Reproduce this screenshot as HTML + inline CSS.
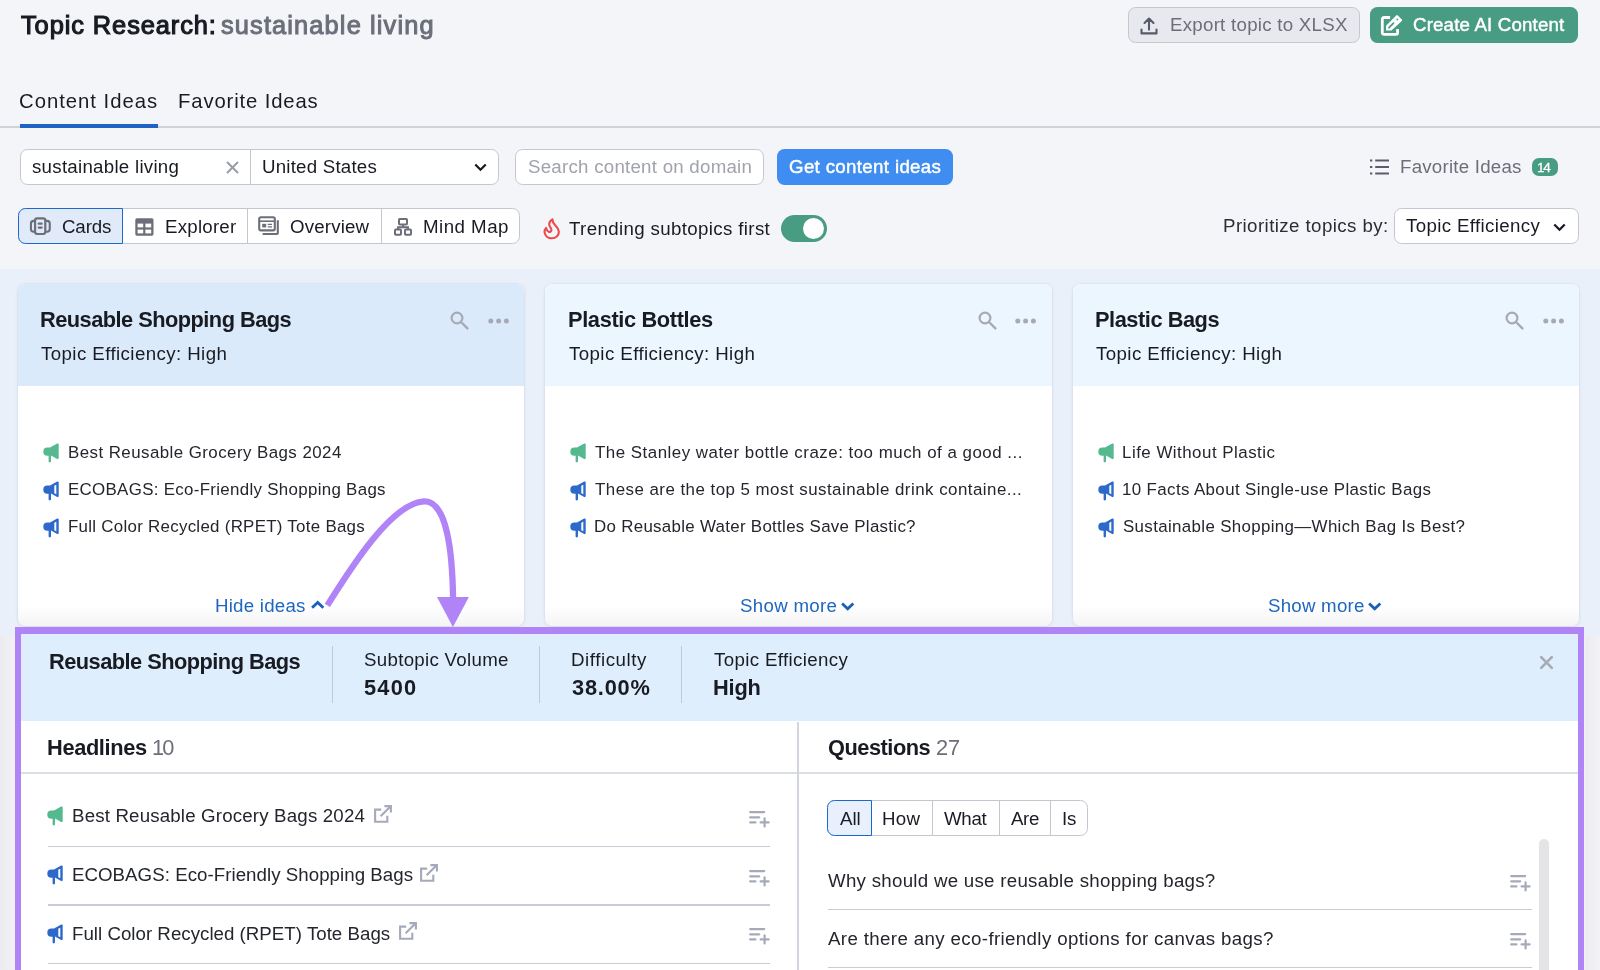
<!DOCTYPE html>
<html><head>
<meta charset="utf-8">
<title>Topic Research</title>
<style>
*{box-sizing:border-box;margin:0;padding:0}
html,body{width:1600px;height:970px;overflow:hidden;background:#f4f5f9;font-family:"Liberation Sans",sans-serif;color:#191b23}
#page{position:relative;width:1600px;height:970px;overflow:hidden}
.t{position:absolute;white-space:nowrap;line-height:1;font-style:normal;font-size:18.7px;will-change:transform}
.b{font-weight:bold}
.g{color:#6c6e79}
.r{position:absolute}
.box{position:absolute;background:#fff;border:1px solid #c4c7cf}
svg{position:absolute;overflow:visible}
.s13{font-size:16.9px}
.lnk{color:#1f67bd}
</style>
</head>
<body>
<div id="page">

<!-- HEADER -->
<i class="t" style="font-size: 25.4px; -webkit-text-stroke: 1.15px rgb(25, 27, 35); left: 20.6px; top: 13px; letter-spacing: 0.92px;">Topic Research:</i>
<i class="t g" style="font-size: 25.4px; -webkit-text-stroke: 1px rgb(108, 110, 121); left: 221px; top: 13px; letter-spacing: 1.13px;">sustainable living</i>

<!-- TABS -->
<i class="t" style="font-size: 20.3px; left: 19px; top: 91px; letter-spacing: 0.99px;">Content Ideas</i>
<i class="t" style="font-size: 20.3px; left: 177.5px; top: 91px; letter-spacing: 0.86px;">Favorite Ideas</i>
<div class="r" style="left:0;top:126.200px;width:1600px;height:1.600px;background:#d0d2d9"></div>
<div class="r" style="left:20px;top:123.900px;width:137.500px;height:3.900px;background:#1f62c2"></div>

<!-- TOP RIGHT BUTTONS -->
<div class="box" style="left:1128px;top:7px;width:232px;height:36px;border-radius:7.5px;background:#e8e9ef;border-color:#c4c7cf"></div>
<svg style="left:1138.600px;top:15.500px" width="20" height="19" viewBox="0 0 20 19"><path d="M10 13.600V2.600M5.500 7L10 2.500l4.500 4.500M2.500 13.600v3.800h15v-3.800" fill="none" stroke="#575a68" stroke-width="2.100" stroke-linecap="round" stroke-linejoin="round"></path></svg>
<i class="t g" style="font-size: 18.7px; left: 1169.5px; top: 16px; letter-spacing: 0.26px;">Export topic to XLSX</i>
<div class="r" style="left:1370px;top:7px;width:208px;height:36px;border-radius:7.5px;background:#479c81"></div>
<svg style="left:1380px;top:14px" width="24" height="23" viewBox="0 0 24 23"><path d="M10.100 3.500H3.900a1.600 1.600 0 0 0-1.600 1.600v13.600a1.600 1.600 0 0 0 1.600 1.600h12.100a1.600 1.600 0 0 0 1.600-1.600v-3.600" fill="none" stroke="#fff" stroke-width="2.800"></path><path d="M6 11.700L16.200 1.500a1.200 1.200 0 0 1 1.700 0l3.900 3.900a1.200 1.200 0 0 1 0 1.700L11.400 16.500H6z" fill="#fff"></path><path d="M9 13.600l4.500-4.500" stroke="#479c81" stroke-width="1.700" stroke-linecap="round"></path><circle cx="17.300" cy="5.400" r="0.900" fill="#479c81"></circle></svg>
<i class="t" style="font-size: 18.7px; color: rgb(255, 255, 255); -webkit-text-stroke: 0.45px rgb(255, 255, 255); left: 1412.7px; top: 16px; letter-spacing: 0.17px;">Create AI Content</i>

<!-- INPUT ROW -->
<div class="box" style="left:20px;top:149px;width:479px;height:35.5px;border-radius:7.5px"></div>
<div class="r" style="left:250px;top:149px;width:1px;height:35.5px;background:#c4c7cf"></div>
<i class="t" style="font-size: 18.7px; left: 31.5px; top: 158px; letter-spacing: 0.27px;">sustainable living</i>
<svg style="left:225.5px;top:160.5px" width="13" height="13" viewBox="0 0 13 13"><path d="M1 1l11 11M12 1L1 12" stroke="#9a9ca8" stroke-width="2" fill="none"></path></svg>
<i class="t" style="font-size: 18.7px; left: 261.5px; top: 158px; letter-spacing: 0.22px;">United States</i>
<svg style="left:473.5px;top:163px" width="13" height="9" viewBox="0 0 13 9"><path d="M1.3 1.5l5.2 5.2 5.2-5.2" stroke="#191b23" stroke-width="2.3" fill="none"></path></svg>
<div class="box" style="left:515px;top:149px;width:248.5px;height:35.5px;border-radius:7.5px"></div>
<i class="t" style="font-size: 18.7px; color: rgb(160, 162, 173); left: 527.5px; top: 158px; letter-spacing: 0.25px;">Search content on domain</i>
<div class="r" style="left:777px;top:149px;width:176px;height:35.5px;border-radius:7.5px;background:#3f8df0"></div>
<i class="t" style="font-size: 18.7px; color: rgb(255, 255, 255); -webkit-text-stroke: 0.45px rgb(255, 255, 255); left: 788.9px; top: 158px; letter-spacing: 0.34px;">Get content ideas</i>
<!-- favorite ideas -->
<svg style="left:1370px;top:158.5px" width="19" height="16" viewBox="0 0 19 16"><path d="M5.2 1.5H19M5.2 8H19M5.2 14.5H19" stroke="#5a5c68" stroke-width="2" fill="none"></path><path d="M0 1.5h2.3M0 8h2.3M0 14.5h2.3" stroke="#5a5c68" stroke-width="2.2" fill="none"></path></svg>
<i class="t g" style="font-size: 18.7px; left: 1399.8px; top: 158px; letter-spacing: 0.23px;">Favorite Ideas</i>
<div class="r" style="left:1532px;top:158px;width:25.5px;height:17.5px;border-radius:7px;background:#479c81"></div>
<i class="t" style="font-size: 13.6px; color: rgb(255, 255, 255); -webkit-text-stroke: 0.3px rgb(255, 255, 255); left: 1537.2px; top: 161px; letter-spacing: -1.36px;">14</i>

<!-- VIEW SWITCHER -->
<div class="box" style="left:18px;top:208px;width:502px;height:36px;border-radius:7.5px"></div>
<div class="r" style="left:18px;top:208px;width:105px;height:36px;border-radius:7.5px 0 0 7.5px;background:#e0eaf9;border:1.3px solid #1c69cc"></div>
<div class="r" style="left:247px;top:209px;width:1px;height:34px;background:#c4c7cf"></div>
<div class="r" style="left:381px;top:209px;width:1px;height:34px;background:#c4c7cf"></div>
<!-- cards icon -->
<svg style="left:29px;top:217px" width="23" height="19" viewBox="0 0 23 19"><rect x="1.950" y="3.850" width="18.800" height="10.900" rx="2.700" fill="none" stroke="#6c6e79" stroke-width="2.100"></rect><rect x="6.060" y="1.400" width="10.240" height="15.600" rx="2.200" fill="#e0eaf9" stroke="#6c6e79" stroke-width="2.200"></rect><path d="M9.700 6.700h3M9.700 10.600h3" stroke="#6c6e79" stroke-width="2.200" stroke-linecap="round" fill="none"></path></svg>
<i class="t" style="font-size: 18.7px; left: 61.8px; top: 218px; letter-spacing: -0.13px;">Cards</i>
<!-- explorer icon -->
<svg style="left:134.5px;top:217.5px" width="19" height="18" viewBox="0 0 19 18"><rect x="0.3" y="0.3" width="18.2" height="17.4" rx="1.6" fill="#6c6e79"></rect><rect x="2.6" y="5.6" width="5.6" height="3.8" fill="#fff"></rect><rect x="10.4" y="5.6" width="5.8" height="3.8" fill="#fff"></rect><rect x="2.6" y="11.6" width="5.6" height="3.8" fill="#fff"></rect><rect x="10.4" y="11.6" width="5.8" height="3.8" fill="#fff"></rect></svg>
<i class="t" style="font-size: 18.7px; left: 164.5px; top: 218px; letter-spacing: 0.23px;">Explorer</i>
<!-- overview icon -->
<svg style="left:257.5px;top:216px" width="22" height="20" viewBox="0 0 22 20"><rect x="1.2" y="1.2" width="15.6" height="13.2" rx="1.6" fill="none" stroke="#6c6e79" stroke-width="2.1"></rect><path d="M1.2 5.2h15.6" stroke="#6c6e79" stroke-width="1.6"></path><rect x="4.2" y="7.8" width="4" height="3.6" fill="#6c6e79"></rect><path d="M9.8 8.4h4.2M9.8 10.8h4.2" stroke="#6c6e79" stroke-width="1.2"></path><path d="M4.6 18h13.6a1.6 1.6 0 0 0 1.6-1.6V4.2" fill="none" stroke="#6c6e79" stroke-width="2.1"></path></svg>
<i class="t" style="font-size: 18.7px; left: 290px; top: 218px; letter-spacing: 0.16px;">Overview</i>
<!-- mind map icon -->
<svg style="left:393.5px;top:217.5px" width="18" height="18" viewBox="0 0 18 18"><rect x="5" y="1" width="8" height="5.6" rx="0.8" fill="none" stroke="#6c6e79" stroke-width="2"></rect><rect x="1" y="11.6" width="6" height="5.2" rx="0.8" fill="none" stroke="#6c6e79" stroke-width="2"></rect><rect x="11" y="11.6" width="6" height="5.2" rx="0.8" fill="none" stroke="#6c6e79" stroke-width="2"></rect><path d="M9 6.8v2.6M4 11.2V9.2h10v2" fill="none" stroke="#6c6e79" stroke-width="1.9"></path></svg>
<i class="t" style="font-size: 18.7px; left: 423.3px; top: 218px; letter-spacing: 0.48px;">Mind Map</i>
<!-- flame -->
<svg style="left:535px;top:210.7px" width="40" height="36" viewBox="0 0 40 36"><path d="M17.500 8.400C15.400 9.700 14 11.600 14.200 13.600C14.400 15.600 16.700 17.400 16.400 19.300C16.200 20.700 14.800 21.300 13.700 20.800C12.500 20.300 11.600 19 11.100 16.900C9.900 18.100 9.400 19.700 9.600 21.300C10 24.700 13 27.300 16.800 27.300C20.800 27.300 23.900 24.600 23.900 20.800C23.900 17.600 21.600 15.700 20.200 14.300C18.600 12.700 17.500 10.900 17.500 8.400Z" fill="none" stroke="#ec4a4c" stroke-width="2.100" stroke-linejoin="round"></path></svg>
<i class="t" style="font-size: 18.7px; left: 568.6px; top: 220px; letter-spacing: 0.36px;">Trending subtopics first</i>
<div class="r" style="left:780.5px;top:215px;width:46.5px;height:26.5px;border-radius:13.5px;background:#479c81"></div>
<div class="r" style="left:802.5px;top:217.5px;width:21.5px;height:21.500px;border-radius:11px;background:#fff"></div>
<!-- prioritize -->
<i class="t" style="font-size: 18.7px; color: rgb(43, 45, 54); left: 1223.3px; top: 217px; letter-spacing: 0.42px;">Prioritize topics by:</i>
<div class="box" style="left:1393.500px;top:208px;width:185.500px;height:36px;border-radius:7.5px"></div>
<i class="t" style="font-size: 18.7px; left: 1406.3px; top: 217px; letter-spacing: 0.36px;">Topic Efficiency</i>
<svg style="left:1553px;top:223px" width="13" height="9" viewBox="0 0 13 9"><path d="M1.300 1.500l5.200 5.200 5.200-5.200" stroke="#191b23" stroke-width="2.300" fill="none"></path></svg>

<!-- CARDS SECTION -->
<div class="r" style="left:0;top:269px;width:1600px;height:367px;background:#eaf0fa"></div>
<div class="r" style="left:17.900px;top:283.5px;width:506.400px;height:342px;border-radius:7px;background:linear-gradient(#fff 0,#fff 94%,#f4f4f5 100%);box-shadow:0 0 1.500px rgba(25,59,103,.16),0 1px 4px rgba(25,59,103,.07);overflow:hidden"><div style="height:102.5px;background:#dbeafb"></div></div>
<i class="t b" style="font-size: 21.8px; left: 40px; top: 309px; letter-spacing: -0.53px;">Reusable Shopping Bags</i>
<i class="t" style="font-size: 18.7px; left: 41px; top: 345px; letter-spacing: 0.41px;">Topic Efficiency: High</i>
<svg style="left:450.2px;top:311.3px" width="20" height="20" viewBox="0 0 20 20"><circle cx="7" cy="7" r="5.4" fill="none" stroke="#a7a9b5" stroke-width="2.200"></circle><path d="M11 11l6.400 6.400" stroke="#a7a9b5" stroke-width="2.400" stroke-linecap="round"></path></svg>
<svg style="left:487.8px;top:317.8px" width="22" height="6" viewBox="0 0 22 6"><circle cx="2.8" cy="3" r="2.500" fill="#a7a9b5"></circle><circle cx="10.600" cy="3" r="2.500" fill="#a7a9b5"></circle><circle cx="18.400" cy="3" r="2.500" fill="#a7a9b5"></circle></svg>
<svg style="left:42.5px;top:442.6px" width="16" height="20" viewBox="0 0 16 20"><path d="M4.4 4.6H7L14.2.6c.7-.4 1.500 0 1.500.9v13.600c0 .8-.8 1.300-1.500.9L8 12.600v5.600c0 .7-.5 1.200-1.200 1.200s-1.200-.5-1.200-1.200v-5.400H4.400A4.100 4.100 0 0 1 .3 8.700 4.100 4.100 0 0 1 4.400 4.600z" fill="#55b990"></path></svg>
<i class="t s13" style="color: rgb(36, 38, 45); left: 67.5px; top: 445px; letter-spacing: 0.44px;">Best Reusable Grocery Bags 2024</i>
<svg style="left:42.5px;top:480.6px" width="16" height="20" viewBox="0 0 16 20"><path d="M4.4 4.600H7L14.200.6c.7-.4 1.500 0 1.500.9v13.600c0 .8-.8 1.300-1.500.9L8 12.600v5.600c0 .7-.5 1.200-1.200 1.200s-1.200-.5-1.200-1.200v-5.400H4.400A4.100 4.100 0 0 1 .3 8.700 4.100 4.100 0 0 1 4.400 4.600z" fill="#2d69cb"></path><path d="M11.300 4.800l2-1.100v9.500l-2-1z" fill="#fff"></path></svg>
<i class="t s13" style="color: rgb(36, 38, 45); left: 67.5px; top: 482px; letter-spacing: 0.31px;">ECOBAGS: Eco-Friendly Shopping Bags</i>
<svg style="left:42.5px;top:518px" width="16" height="20" viewBox="0 0 16 20"><path d="M4.4 4.600H7L14.200.6c.7-.4 1.500 0 1.500.9v13.600c0 .8-.8 1.300-1.500.9L8 12.600v5.600c0 .7-.5 1.200-1.200 1.200s-1.200-.5-1.200-1.200v-5.400H4.400A4.100 4.100 0 0 1 .3 8.700 4.100 4.100 0 0 1 4.400 4.600z" fill="#2d69cb"></path><path d="M11.300 4.800l2-1.100v9.500l-2-1z" fill="#fff"></path></svg>
<i class="t s13" style="color: rgb(36, 38, 45); left: 67.5px; top: 519px; letter-spacing: 0.28px;">Full Color Recycled (RPET) Tote Bags</i>
<i class="t lnk" style="font-size: 18.7px; left: 215.4px; top: 597px; letter-spacing: 0.23px;">Hide ideas</i>
<svg style="left:310.7px;top:599.5px" width="13" height="9" viewBox="0 0 13 9"><path d="M1.100 7.800l5.600-5.400 5.600 5.400" stroke="#1b5fb8" stroke-width="2.800" fill="none"></path></svg>
<div class="r" style="left:544.700px;top:283.5px;width:507.500px;height:342px;border-radius:7px;background:linear-gradient(#fff 0,#fff 94%,#f4f4f5 100%);box-shadow:0 0 1.500px rgba(25,59,103,.16),0 1px 4px rgba(25,59,103,.07);overflow:hidden"><div style="height:102.5px;background:#ecf6fe"></div></div>
<i class="t b" style="font-size: 21.8px; left: 567.6px; top: 309px; letter-spacing: -0.36px;">Plastic Bottles</i>
<i class="t" style="font-size: 18.7px; left: 568.5px; top: 345px; letter-spacing: 0.41px;">Topic Efficiency: High</i>
<svg style="left:977.7px;top:311.3px" width="20" height="20" viewBox="0 0 20 20"><circle cx="7" cy="7" r="5.4" fill="none" stroke="#a7a9b5" stroke-width="2.200"></circle><path d="M11 11l6.400 6.400" stroke="#a7a9b5" stroke-width="2.400" stroke-linecap="round"></path></svg>
<svg style="left:1015.3px;top:317.8px" width="22" height="6" viewBox="0 0 22 6"><circle cx="2.8" cy="3" r="2.500" fill="#a7a9b5"></circle><circle cx="10.600" cy="3" r="2.500" fill="#a7a9b5"></circle><circle cx="18.400" cy="3" r="2.500" fill="#a7a9b5"></circle></svg>
<svg style="left:570.0px;top:442.6px" width="16" height="20" viewBox="0 0 16 20"><path d="M4.4 4.6H7L14.2.6c.7-.4 1.500 0 1.500.9v13.600c0 .8-.8 1.300-1.500.9L8 12.600v5.600c0 .7-.5 1.200-1.200 1.200s-1.200-.5-1.200-1.200v-5.400H4.400A4.100 4.100 0 0 1 .3 8.700 4.100 4.100 0 0 1 4.400 4.600z" fill="#55b990"></path></svg>
<i class="t s13" style="color: rgb(36, 38, 45); left: 595.3px; top: 445px; letter-spacing: 0.5px;">The Stanley water bottle craze: too much of a good ...</i>
<svg style="left:570.0px;top:480.6px" width="16" height="20" viewBox="0 0 16 20"><path d="M4.4 4.600H7L14.200.6c.7-.4 1.500 0 1.500.9v13.600c0 .8-.8 1.300-1.500.9L8 12.600v5.600c0 .7-.5 1.200-1.200 1.200s-1.200-.5-1.200-1.200v-5.400H4.400A4.100 4.100 0 0 1 .3 8.700 4.100 4.100 0 0 1 4.400 4.600z" fill="#2d69cb"></path><path d="M11.300 4.800l2-1.100v9.500l-2-1z" fill="#fff"></path></svg>
<i class="t s13" style="color: rgb(36, 38, 45); left: 595.3px; top: 482px; letter-spacing: 0.47px;">These are the top 5 most sustainable drink containe...</i>
<svg style="left:570.0px;top:518px" width="16" height="20" viewBox="0 0 16 20"><path d="M4.4 4.600H7L14.200.6c.7-.4 1.500 0 1.500.9v13.600c0 .8-.8 1.300-1.500.9L8 12.600v5.600c0 .7-.5 1.200-1.200 1.200s-1.200-.5-1.200-1.200v-5.400H4.400A4.100 4.100 0 0 1 .3 8.700 4.100 4.100 0 0 1 4.400 4.600z" fill="#2d69cb"></path><path d="M11.300 4.800l2-1.100v9.500l-2-1z" fill="#fff"></path></svg>
<i class="t s13" style="color: rgb(36, 38, 45); left: 594.3px; top: 519px; letter-spacing: 0.3px;">Do Reusable Water Bottles Save Plastic?</i>
<i class="t lnk" style="font-size: 18.7px; left: 740px; top: 597px; letter-spacing: 0.3px;">Show more</i>
<svg style="left:840.6px;top:601.7px" width="13" height="9" viewBox="0 0 13 9"><path d="M1.100 1.400l5.600 5.400 5.600-5.400" stroke="#1b5fb8" stroke-width="2.800" fill="none"></path></svg>
<div class="r" style="left:1072.600px;top:283.5px;width:506.600px;height:342px;border-radius:7px;background:linear-gradient(#fff 0,#fff 94%,#f4f4f5 100%);box-shadow:0 0 1.500px rgba(25,59,103,.16),0 1px 4px rgba(25,59,103,.07);overflow:hidden"><div style="height:102.5px;background:#ecf6fe"></div></div>
<i class="t b" style="font-size: 21.8px; left: 1095.2px; top: 309px; letter-spacing: -0.46px;">Plastic Bags</i>
<i class="t" style="font-size: 18.7px; left: 1096px; top: 345px; letter-spacing: 0.41px;">Topic Efficiency: High</i>
<svg style="left:1505.2px;top:311.3px" width="20" height="20" viewBox="0 0 20 20"><circle cx="7" cy="7" r="5.4" fill="none" stroke="#a7a9b5" stroke-width="2.200"></circle><path d="M11 11l6.400 6.400" stroke="#a7a9b5" stroke-width="2.400" stroke-linecap="round"></path></svg>
<svg style="left:1542.8px;top:317.8px" width="22" height="6" viewBox="0 0 22 6"><circle cx="2.8" cy="3" r="2.500" fill="#a7a9b5"></circle><circle cx="10.600" cy="3" r="2.500" fill="#a7a9b5"></circle><circle cx="18.400" cy="3" r="2.500" fill="#a7a9b5"></circle></svg>
<svg style="left:1097.5px;top:442.6px" width="16" height="20" viewBox="0 0 16 20"><path d="M4.4 4.6H7L14.2.6c.7-.4 1.500 0 1.500.9v13.600c0 .8-.8 1.300-1.500.9L8 12.600v5.600c0 .7-.5 1.200-1.200 1.200s-1.200-.5-1.200-1.200v-5.400H4.400A4.100 4.100 0 0 1 .3 8.700 4.100 4.100 0 0 1 4.400 4.600z" fill="#55b990"></path></svg>
<i class="t s13" style="color: rgb(36, 38, 45); left: 1121.8px; top: 445px; letter-spacing: 0.49px;">Life Without Plastic</i>
<svg style="left:1097.5px;top:480.6px" width="16" height="20" viewBox="0 0 16 20"><path d="M4.4 4.600H7L14.200.6c.7-.4 1.500 0 1.500.9v13.600c0 .8-.8 1.300-1.500.9L8 12.600v5.600c0 .7-.5 1.200-1.200 1.200s-1.200-.5-1.200-1.200v-5.400H4.400A4.100 4.100 0 0 1 .3 8.700 4.100 4.100 0 0 1 4.400 4.600z" fill="#2d69cb"></path><path d="M11.300 4.800l2-1.100v9.500l-2-1z" fill="#fff"></path></svg>
<i class="t s13" style="color: rgb(36, 38, 45); left: 1121.8px; top: 482px; letter-spacing: 0.38px;">10 Facts About Single-use Plastic Bags</i>
<svg style="left:1097.5px;top:518px" width="16" height="20" viewBox="0 0 16 20"><path d="M4.4 4.600H7L14.200.6c.7-.4 1.500 0 1.500.9v13.600c0 .8-.8 1.300-1.500.9L8 12.600v5.600c0 .7-.5 1.200-1.200 1.200s-1.200-.5-1.200-1.200v-5.400H4.400A4.100 4.100 0 0 1 .3 8.700 4.100 4.100 0 0 1 4.400 4.600z" fill="#2d69cb"></path><path d="M11.300 4.800l2-1.100v9.500l-2-1z" fill="#fff"></path></svg>
<i class="t s13" style="color: rgb(36, 38, 45); left: 1122.8px; top: 519px; letter-spacing: 0.35px;">Sustainable Shopping—Which Bag Is Best?</i>
<i class="t lnk" style="font-size: 18.7px; left: 1267.7px; top: 597px; letter-spacing: 0.23px;">Show more</i>
<svg style="left:1367.9px;top:601.7px" width="13" height="9" viewBox="0 0 13 9"><path d="M1.100 1.400l5.600 5.400 5.600-5.400" stroke="#1b5fb8" stroke-width="2.800" fill="none"></path></svg>

<!-- DETAIL PANEL -->
<div class="r" style="left:0;top:636px;width:1600px;height:334px;background:linear-gradient(90deg,#ebebf0 0,#f1f1f6 15px,#f1f1f6 1584px,#ebebf0 1586px,#f2f2f7 1600px)"></div>
<div class="r" style="left:15px;top:627.100px;width:1569.100px;height:360px;background:#b083f7"></div><div class="r" style="left:21.200px;top:633.800px;width:1556.700px;height:340px;background:#fff"><div style="height:87.700px;background:#dfeefd"></div></div>
<i class="t b" style="font-size: 21.8px; left: 49px; top: 651px; letter-spacing: -0.53px;">Reusable Shopping Bags</i>
<div class="r" style="left:331.5px;top:646px;width:1.200px;height:56.500px;background:#c3c8d2"></div>
<div class="r" style="left:538.5px;top:646px;width:1.200px;height:56.500px;background:#c3c8d2"></div>
<div class="r" style="left:681px;top:646px;width:1.200px;height:56.500px;background:#c3c8d2"></div>
<i class="t" style="font-size: 18.7px; left: 364px; top: 651px; letter-spacing: 0.3px;">Subtopic Volume</i>
<i class="t b" style="font-size: 21.8px; left: 364px; top: 677px; letter-spacing: 1.21px;">5400</i>
<i class="t" style="font-size: 18.7px; left: 570.5px; top: 651px; letter-spacing: 0.56px;">Difficulty</i>
<i class="t b" style="font-size: 21.8px; left: 571.5px; top: 677px; letter-spacing: 0.79px;">38.00%</i>
<i class="t" style="font-size: 18.7px; left: 714px; top: 651px; letter-spacing: 0.36px;">Topic Efficiency</i>
<i class="t b" style="font-size: 21.8px; left: 713px; top: 677px; letter-spacing: -0.2px;">High</i>
<svg style="left:1540.300px;top:655.900px" width="13" height="13" viewBox="0 0 13 13"><path d="M1.200 1.200l10.600 10.600M11.800 1.200L1.200 11.800" stroke="#a7a9b5" stroke-width="2.600" stroke-linecap="round" fill="none"></path></svg>
<i class="t b" style="font-size: 21.8px; left: 46.5px; top: 737px; letter-spacing: -0.36px;">Headlines</i>
<i class="t g" style="font-size: 21.8px; left: 152.3px; top: 737px; letter-spacing: -1.92px;">10</i>
<i class="t b" style="font-size: 21.8px; left: 827.5px; top: 737px; letter-spacing: -0.49px;">Questions</i>
<i class="t g" style="font-size: 21.8px; left: 935.5px; top: 737px; letter-spacing: -0.12px;">27</i>
<div class="r" style="left:21.200px;top:772.300px;width:1556.700px;height:1.400px;background:#dcdee6"></div>
<div class="r" style="left:797px;top:721.500px;width:1.500px;height:250px;background:#d3d5de"></div>
<svg style="left:47px;top:806.3px" width="16" height="20" viewBox="0 0 16 20"><path d="M4.4 4.6H7L14.2.6c.7-.4 1.500 0 1.500.9v13.600c0 .8-.8 1.300-1.500.9L8 12.600v5.600c0 .7-.5 1.200-1.200 1.200s-1.200-.5-1.200-1.200v-5.400H4.400A4.100 4.100 0 0 1 .3 8.700 4.100 4.100 0 0 1 4.400 4.600z" fill="#55b990"></path></svg>
<i class="t" style="font-size: 18.7px; color: rgb(36, 38, 45); left: 71.5px; top: 807px; letter-spacing: 0.17px;">Best Reusable Grocery Bags 2024</i>
<svg style="left:373.5px;top:805.0px" width="18" height="18" viewBox="0 0 18 18"><path d="M7.2 4.600H1.100v12.200h12.200v-6" fill="none" stroke="#a6a9b9" stroke-width="2.100"></path><path d="M6.600 11.300L16.400 1.500M10.400 1.100h6.500v6.500" fill="none" stroke="#a6a9b9" stroke-width="2.100"></path></svg>
<svg style="left:748.6px;top:810.0px" width="21" height="18" viewBox="0 0 21 18"><path d="M1.200 2.100h14M1.200 7.300h9M1.200 12.400h5.200M11.600 12.400h8M15.600 8.400v8" fill="none" stroke="#a6a9b9" stroke-width="2.200" stroke-linecap="round"></path></svg>
<div class="r" style="left:47.500px;top:845.5px;width:722.500px;height:1.400px;background:#c9ccd6"></div>
<svg style="left:47px;top:865.0px" width="16" height="20" viewBox="0 0 16 20"><path d="M4.4 4.600H7L14.200.6c.7-.4 1.500 0 1.500.9v13.600c0 .8-.8 1.300-1.500.9L8 12.600v5.600c0 .7-.5 1.200-1.200 1.200s-1.200-.5-1.200-1.200v-5.400H4.400A4.100 4.100 0 0 1 .3 8.700 4.100 4.100 0 0 1 4.400 4.600z" fill="#2d69cb"></path><path d="M11.300 4.800l2-1.100v9.500l-2-1z" fill="#fff"></path></svg>
<i class="t" style="font-size: 18.7px; color: rgb(36, 38, 45); left: 71.5px; top: 866px; letter-spacing: 0.04px;">ECOBAGS: Eco-Friendly Shopping Bags</i>
<svg style="left:420px;top:863.7px" width="18" height="18" viewBox="0 0 18 18"><path d="M7.2 4.600H1.100v12.200h12.200v-6" fill="none" stroke="#a6a9b9" stroke-width="2.100"></path><path d="M6.600 11.300L16.400 1.500M10.400 1.100h6.500v6.500" fill="none" stroke="#a6a9b9" stroke-width="2.100"></path></svg>
<svg style="left:748.6px;top:868.7px" width="21" height="18" viewBox="0 0 21 18"><path d="M1.200 2.100h14M1.200 7.300h9M1.200 12.400h5.200M11.600 12.400h8M15.600 8.400v8" fill="none" stroke="#a6a9b9" stroke-width="2.200" stroke-linecap="round"></path></svg>
<div class="r" style="left:47.500px;top:904.2px;width:722.500px;height:1.400px;background:#c9ccd6"></div>
<svg style="left:47px;top:923.7px" width="16" height="20" viewBox="0 0 16 20"><path d="M4.4 4.600H7L14.200.6c.7-.4 1.500 0 1.500.9v13.600c0 .8-.8 1.300-1.500.9L8 12.600v5.600c0 .7-.5 1.200-1.200 1.200s-1.200-.5-1.200-1.200v-5.400H4.400A4.100 4.100 0 0 1 .3 8.700 4.100 4.100 0 0 1 4.400 4.600z" fill="#2d69cb"></path><path d="M11.300 4.800l2-1.100v9.500l-2-1z" fill="#fff"></path></svg>
<i class="t" style="font-size: 18.7px; color: rgb(36, 38, 45); left: 71.5px; top: 925px; letter-spacing: 0.02px;">Full Color Recycled (RPET) Tote Bags</i>
<svg style="left:398.5px;top:922.4px" width="18" height="18" viewBox="0 0 18 18"><path d="M7.2 4.600H1.100v12.200h12.200v-6" fill="none" stroke="#a6a9b9" stroke-width="2.100"></path><path d="M6.600 11.300L16.400 1.500M10.400 1.100h6.500v6.500" fill="none" stroke="#a6a9b9" stroke-width="2.100"></path></svg>
<svg style="left:748.6px;top:927.4px" width="21" height="18" viewBox="0 0 21 18"><path d="M1.200 2.100h14M1.200 7.300h9M1.200 12.400h5.200M11.600 12.400h8M15.600 8.400v8" fill="none" stroke="#a6a9b9" stroke-width="2.200" stroke-linecap="round"></path></svg>
<div class="r" style="left:47.500px;top:962.9px;width:722.500px;height:1.400px;background:#c9ccd6"></div>
<div class="box" style="left:827.400px;top:800px;width:260.200px;height:36px;border-radius:7.5px"></div>
<div class="r" style="left:827.400px;top:800px;width:44.600px;height:36px;border-radius:7.5px 0 0 7.5px;background:#e9f0fd;border:1.300px solid #1c69cc"></div>
<div class="r" style="left:932px;top:801px;width:1px;height:34px;background:#c4c7cf"></div>
<div class="r" style="left:999px;top:801px;width:1px;height:34px;background:#c4c7cf"></div>
<div class="r" style="left:1049.900px;top:801px;width:1px;height:34px;background:#c4c7cf"></div>
<i class="t" style="font-size: 18.7px; left: 840px; top: 810px; letter-spacing: -0.06px;">All</i>
<i class="t" style="font-size: 18.7px; left: 882px; top: 810px; letter-spacing: 0.31px;">How</i>
<i class="t" style="font-size: 18.7px; left: 944px; top: 810px; letter-spacing: -0.31px;">What</i>
<i class="t" style="font-size: 18.7px; left: 1010.5px; top: 810px; letter-spacing: -0.34px;">Are</i>
<i class="t" style="font-size: 18.7px; left: 1061.5px; top: 810px; letter-spacing: -0.19px;">Is</i>
<i class="t" style="font-size: 18.7px; color: rgb(36, 38, 45); left: 827.5px; top: 872px; letter-spacing: 0.28px;">Why should we use reusable shopping bags?</i>
<svg style="left:1510.2px;top:873.8px" width="21" height="18" viewBox="0 0 21 18"><path d="M1.200 2.100h14M1.200 7.300h9M1.200 12.400h5.200M11.600 12.400h8M15.600 8.400v8" fill="none" stroke="#a6a9b9" stroke-width="2.200" stroke-linecap="round"></path></svg>
<div class="r" style="left:827.500px;top:908.9px;width:704px;height:1.400px;background:#c9ccd6"></div>
<i class="t" style="font-size: 18.7px; color: rgb(36, 38, 45); left: 827.5px; top: 930px; letter-spacing: 0.37px;">Are there any eco-friendly options for canvas bags?</i>
<svg style="left:1510.2px;top:931.6px" width="21" height="18" viewBox="0 0 21 18"><path d="M1.200 2.100h14M1.200 7.300h9M1.200 12.400h5.200M11.600 12.400h8M15.600 8.400v8" fill="none" stroke="#a6a9b9" stroke-width="2.200" stroke-linecap="round"></path></svg>
<div class="r" style="left:827.500px;top:966.7px;width:704px;height:1.400px;background:#c9ccd6"></div>
<div class="r" style="left:1539px;top:838.500px;width:10px;height:140px;border-radius:5px;background:#e4e4e7"></div>

<!-- PURPLE ARROW -->
<svg style="left:0;top:0" width="1600" height="970" viewBox="0 0 1600 970"><path d="M327.3 605.4C352 566 392 503 424 501.4C447 500.500 452.500 552 453.100 600" fill="none" stroke="#b083f7" stroke-width="6.300"></path><path d="M437 597.100h31.900L452.900 626.900z" fill="#b083f7"></path></svg>


</div>


</body></html>
